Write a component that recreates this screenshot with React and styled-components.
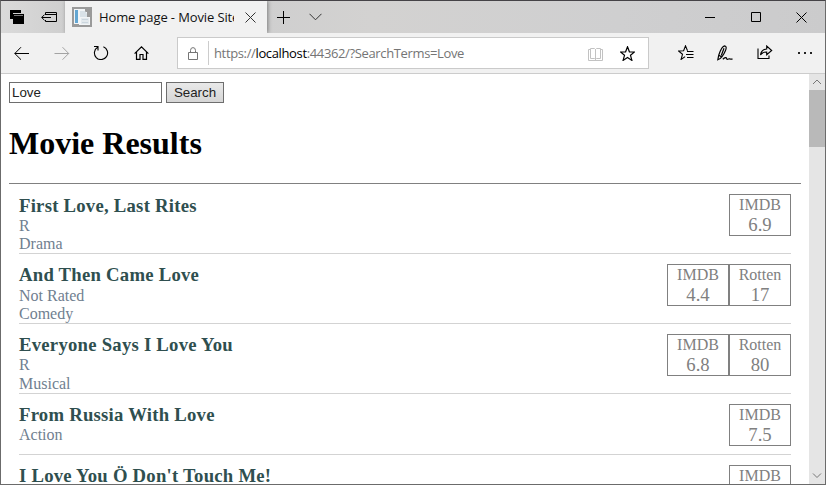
import React from 'react';
import styled, { createGlobalStyle } from 'styled-components';

const GlobalStyle = createGlobalStyle`
  * { box-sizing: border-box; }
  body { margin: 0; overflow: hidden; background: #fff; }
`;

const Window = styled.div`
  width: 826px;
  height: 485px;
  display: flex;
  flex-direction: column;
  overflow: hidden;
  border: 1px solid #6b6b6b;
  border-top-color: #454347;
  background: #fff;
`;

const TitleBar = styled.header`
  height: 32px;
  flex: none;
  display: flex;
  align-items: stretch;
  background: linear-gradient(90deg, #dadada 0, #cfcfcf 64px, #cfcfcf 264px, #d3d2d1 45%, #cfcfd0 75%, #cbcbcc 100%);
`;

const Glyph = styled.svg`
  display: block;
  flex: none;
  width: ${(p) => p.$w}px;
  height: ${(p) => p.$h}px;
  margin-left: ${(p) => p.$gap || 0}px;
  margin-top: ${(p) => p.$top || 0}px;
  fill: none;
  stroke: ${(p) => p.$color || '#000'};
  stroke-width: ${(p) => p.$stroke || 1};
`;

const Tab = styled.div`
  width: 202px;
  margin-left: 7px;
  padding-left: 7px;
  display: flex;
  align-items: flex-start;
  background: #f1f1f1;
  box-shadow: 1px 0 4px rgba(0, 0, 0, 0.4);
  clip-path: inset(0 -6px 0 -6px);
`;

const TabTitle = styled.span`
  width: 135px;
  margin: 6px 0 0 7px;
  overflow: hidden;
  white-space: nowrap;
  font: 13px/20px "Open Sans", sans-serif;
  letter-spacing: -0.12px;
  color: #111;
`;

const ToolBar = styled.nav`
  height: 41px;
  flex: none;
  display: flex;
  align-items: flex-start;
  background: #f1f1f1;
  border-bottom: 1px solid #ccc;
`;

const AddressBar = styled.div`
  width: 472px;
  height: 32px;
  margin: 4px 0 0 28px;
  display: flex;
  border: 1px solid #cacaca;
  background: #fff;
`;

const AddressRule = styled.i`
  width: 1px;
  height: 24px;
  margin: 3px 0 0 9px;
  background: #ccc;
`;

const Address = styled.span`
  width: 374px;
  margin: 5px 0 0 5px;
  white-space: nowrap;
  font: 13px/20px "Open Sans", sans-serif;
  letter-spacing: -0.36px;
  color: #757575;
`;

const Host = styled.span`
  color: #000;
`;

const Viewport = styled.div`
  flex: 1;
  min-height: 0;
  display: flex;
`;

const Page = styled.main`
  flex: 1;
  padding: 8px 8px 0;
  overflow: hidden;
  font-family: "Liberation Serif", serif;
`;

const SearchForm = styled.form`
  display: flex;
  gap: 4px;
`;

const SearchInput = styled.input`
  width: 153px;
  height: 21px;
  padding: 0 2px;
  border: 1px solid #6e6e6e;
  border-radius: 0;
  outline: 0;
  font: 13.33px "Liberation Sans", sans-serif;
  color: #222;
`;

const SearchButton = styled.button`
  width: 58px;
  height: 21px;
  padding: 0;
  border: 1px solid #6e6e6e;
  border-radius: 0;
  background: linear-gradient(#e9e9e9, #d6d6d6);
  font: 13.33px "Liberation Sans", sans-serif;
  color: #222;
`;

const Heading = styled.h1`
  margin: 21px 0;
  font-size: 32px;
  line-height: 38px;
`;

const MovieList = styled.section`
  border-top: 1px solid #808080;
  padding: 0 10px;
`;

const MovieRow = styled.article`
  display: flex;
  align-items: flex-start;
  justify-content: space-between;
  height: ${(p) => p.$height}px;
  padding-top: 10px;
  border-bottom: 1px solid #d3d3d3;
`;

const MovieTitle = styled.h2`
  height: ${(p) => p.$height}px;
  margin: 0;
  padding-top: ${(p) => p.$drop}px;
  font-size: 18.72px;
  line-height: 21px;
  letter-spacing: 0.24px;
  white-space: nowrap;
  color: darkslategray;
`;

const Details = styled.div`
  display: flex;
  flex-direction: column;
  gap: ${(p) => p.$gap}px;
  font-size: 16px;
  line-height: 18px;
  color: slategray;
`;

const Scores = styled.div`
  display: flex;
`;

const ScoreBox = styled.div`
  width: 62px;
  height: 42px;
  border: 1px solid #808080;
  text-align: center;
  color: #808080;
  font-size: 16px;
  line-height: 19px;
`;

const ScoreValue = styled.div`
  font-size: 18.72px;
  line-height: 21px;
`;

const ScrollBar = styled.div`
  width: 16px;
  display: flex;
  flex-direction: column;
  background: #e5e5e5;
`;

const Thumb = styled.div`
  height: 57px;
  margin-bottom: auto;
  background: #b9b9b9;
`;

const movies = [
  { title: 'First Love, Last Rites', details: ['R', 'Drama'], scores: [['IMDB', '6.9']], drop: 1, titleHeight: 23 },
  { title: 'And Then Came Love', details: ['Not Rated', 'Comedy'], scores: [['IMDB', '4.4'], ['Rotten', '17']], titleHeight: 23 },
  { title: 'Everyone Says I Love You', details: ['R', 'Musical'], scores: [['IMDB', '6.8'], ['Rotten', '80']], gap: 1 },
  { title: 'From Russia With Love', details: ['Action'], scores: [['IMDB', '7.5']], height: 61 },
  { title: "I Love You Ö Don't Touch Me!", details: [], scores: [['IMDB', '']] },
];

const star = 'M7.5 .8 L9.4 5.8 L14.5 6 L10.5 9.3 L11.9 14.4 L7.5 11.5 L3.1 14.4 L4.5 9.3 L.5 6 L5.6 5.8 Z';

function Tabs() {
  return (
    <TitleBar>
      <Glyph $w={15} $h={14} $gap={9} $top={9}>
        <path d="M0 0h11v3H3v6H0z" fill="#000" stroke="none" />
        <path d="M3 4h11v10H3z" fill="#000" stroke="none" />
        <path d="M3 3.5h11M4 5.5h9" stroke="#ccc" strokeWidth=".6" />
      </Glyph>
      <Glyph $w={17} $h={12} $gap={16} $top={10}>
        <path d="M4.5 3V1.5h11v9h-11V9M4 3.5h11M.8 6.5H10M3.5 3.6 .7 6.5l2.8 2.8" />
      </Glyph>
      <Tab>
        <Glyph $w={20} $h={20} $top={6} $color="none">
          <path d="M0 0h20v20H0z" fill="#9a9a9a" />
          <path d="M2 2h11v3h2v5h3v8H7v-1H2z" fill="#f2f5f7" />
          <path d="M3 3h3v13H3z" fill="#63a6d2" />
          <path d="M8 4h5l2 3v3H8z" fill="#d9e2e8" />
          <path d="M9 11h8v6H9z" fill="#e3e9ed" />
          <path d="M10 12h6v1h-6zM10 15h6v1h-6z" fill="#cbd6de" />
        </Glyph>
        <TabTitle>Home page - Movie Site</TabTitle>
        <Glyph $w={11} $h={11} $gap={11} $top={11} $color="#333">
          <path d="M.5.5l10 10M10.5.5l-10 10" />
        </Glyph>
      </Tab>
      <Glyph $w={13} $h={13} $gap={10} $top={10}>
        <path d="M6.5 0v13M0 6.5h13" />
      </Glyph>
      <Glyph $w={13} $h={8} $gap={19} $top={12} $color="#333">
        <path d="M.5.8l6 6 6-6" />
      </Glyph>
      <Glyph $w={11} $h={11} $gap={383} $top={10}>
        <path d="M0 6.5h10" />
      </Glyph>
      <Glyph $w={10} $h={10} $gap={35} $top={11}>
        <path d="M.5.5h9v9h-9z" />
      </Glyph>
      <Glyph $w={11} $h={11} $gap={35} $top={11}>
        <path d="M.5.5l10 10M10.5.5l-10 10" />
      </Glyph>
    </TitleBar>
  );
}

function Tools() {
  return (
    <ToolBar>
      <Glyph $w={16} $h={14} $gap={13} $top={13}>
        <path d="M.7 7.5H15M7 1.2.8 7.5 7 13.7" />
      </Glyph>
      <Glyph $w={16} $h={14} $gap={24} $top={13} $color="#a3a3a3">
        <path d="M.5 7.5h14.3M8.5 1.2l6.2 6.3-6.2 6.2" />
      </Glyph>
      <Glyph $w={16} $h={15} $gap={23} $top={12} $stroke={1.1}>
        <path d="M4.6 2.3A6.6 6.6 0 1 0 10.4 1.8M1 1.5h4v4" />
      </Glyph>
      <Glyph $w={15} $h={14} $gap={25} $top={13} $stroke={1.2}>
        <path d="M.6 7.6 7.5.9l6.9 6.7M2.5 6v7.4h3.5V8.5h3v4.9h3.5V6" />
      </Glyph>
      <AddressBar>
        <Glyph $w={11} $h={14} $gap={10} $top={9} $color="#757575">
          <path d="M.5 5.5h9v7h-9zM2.5 5.5v-2a2.5 2.9 0 0 1 5 0v2" />
        </Glyph>
        <AddressRule />
        <Address>
          https://<Host>localhost</Host>:44362/?SearchTerms=Love
        </Address>
        <Glyph $w={15} $h={13} $gap={0} $top={10} $color="#c2c2c2">
          <path d="M2.5.5h4l1 1 1-1h4v10h-4l-1 1-1-1h-4zM7.5 1v11M2 1.5H.5v11h14v-11H13" />
        </Glyph>
        <Glyph $w={15} $h={15} $gap={17} $top={8} $stroke={1.2}>
          <path d={star} />
        </Glyph>
      </AddressBar>
      <Glyph $w={16} $h={15} $gap={29} $top={12} $stroke={1.1}>
        <path d="M9.5 5.8 7.5.9 5.6 5.8.5 6l4 3.3-1.4 5.1 4-2.8M9 6.5h6.5M8 9.5h7.5M9 12.5h6.5" />
      </Glyph>
      <Glyph $w={16} $h={16} $gap={23} $top={12} $stroke={1.2}>
        <path d="M.8 14.8 1.8 10C3.2 5.8 5.2 1 7.6.8c2.2.2 1.7 2.7.9 4.6C7 9 4.4 13.5.8 14.8ZM1.9 10.2l2.4 1.6M4.3 10.5 7 3.2M5.8 14.2c2-1.8 3.6-2 3.9-.6.3 1.4 1.5.5 2.6.2.9-.2 1.3.9 3.2.1" />
      </Glyph>
      <Glyph $w={16} $h={15} $gap={24} $top={12} $stroke={1.1}>
        <path d="M1 3.5v10h11v-3M3.5 10C4 6 6.5 4.2 9.7 4V1l5 4.5-5 4.2V7C6.5 7 4.6 8 3.5 10Z" />
      </Glyph>
      <Glyph $w={14} $h={3} $gap={25} $top={18} $color="none">
        <path d="M0 1h2v2H0zM6 1h2v2H6zM12 1h2v2h-2z" fill="#222" />
      </Glyph>
    </ToolBar>
  );
}

export default function App() {
  return (
    <>
      <GlobalStyle />
      <Window>
        <Tabs />
        <Tools />
        <Viewport>
          <Page>
            <SearchForm>
              <SearchInput defaultValue="Love" />
              <SearchButton type="button">Search</SearchButton>
            </SearchForm>
            <Heading>Movie Results</Heading>
            <MovieList>
              {movies.map((movie) => (
                <MovieRow key={movie.title} $height={movie.height || 70}>
                  <div>
                    <MovieTitle $drop={movie.drop || 0} $height={movie.titleHeight || 22}>
                      {movie.title}
                    </MovieTitle>
                    <Details $gap={movie.gap || 0}>
                      {movie.details.map((text) => (
                        <div key={text}>{text}</div>
                      ))}
                    </Details>
                  </div>
                  <Scores>
                    {movie.scores.map(([source, value]) => (
                      <ScoreBox key={source}>
                        {source}
                        <ScoreValue>{value}</ScoreValue>
                      </ScoreBox>
                    ))}
                  </Scores>
                </MovieRow>
              ))}
            </MovieList>
          </Page>
          <ScrollBar>
            <Glyph $w={16} $h={16} $color="#777">
              <path d="M4 10l4-4 4 4" />
            </Glyph>
            <Thumb />
            <Glyph $w={16} $h={16} $color="#777">
              <path d="M4 5.5l4 4 4-4" />
            </Glyph>
          </ScrollBar>
        </Viewport>
      </Window>
    </>
  );
}
